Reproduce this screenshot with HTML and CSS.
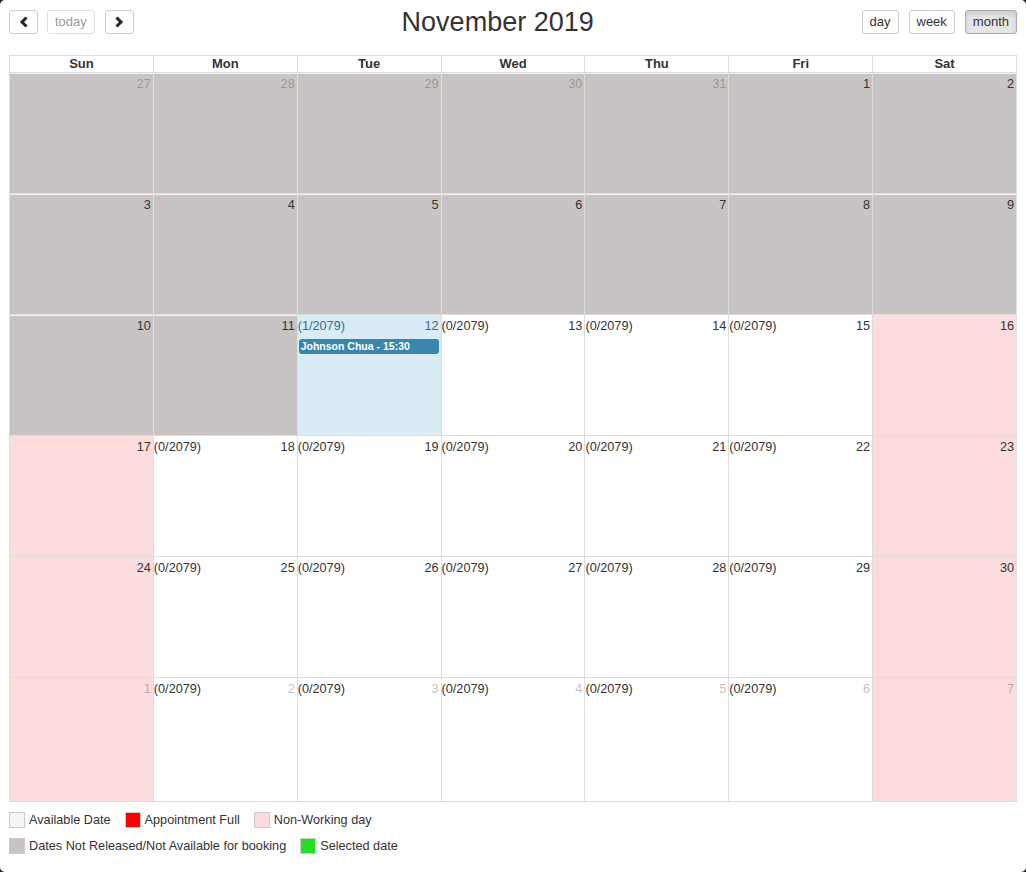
FILE: index.html
```html
<!DOCTYPE html>
<html lang="en">
<head>
<meta charset="UTF-8">
<meta name="viewport" content="width=device-width, initial-scale=1.0">
<title>Appointment Calendar</title>
<link rel="stylesheet" href="styles.css">
</head>
<body>
<div id="panel">
    <div class="toolbar">
        <div class="btn-group">
            <button class="btn icon-btn" title="prev">
                <svg width="10" height="12" viewBox="0 0 10 12"><polyline points="7.5,1.5 3,6 7.5,10.5" fill="none" stroke="#262626" stroke-width="3"/></svg>
            </button>
            <button class="btn" disabled>today</button>
            <button class="btn icon-btn" title="next">
                <svg width="10" height="12" viewBox="0 0 10 12"><polyline points="2.5,1.5 7,6 2.5,10.5" fill="none" stroke="#262626" stroke-width="3"/></svg>
            </button>
        </div>
        <h2>November 2019</h2>
        <div class="btn-group right">
            <button class="btn">day</button>
            <button class="btn">week</button>
            <button class="btn active">month</button>
        </div>
    </div>

    <div class="month">
        <div class="head">Sun</div>
        <div class="head">Mon</div>
        <div class="head">Tue</div>
        <div class="head">Wed</div>
        <div class="head">Thu</div>
        <div class="head">Fri</div>
        <div class="head">Sat</div>

        <!-- week 1 -->
        <div class="day off other"><div class="top"><span></span><span class="num">27</span></div></div>
        <div class="day off other"><div class="top"><span></span><span class="num">28</span></div></div>
        <div class="day off other"><div class="top"><span></span><span class="num">29</span></div></div>
        <div class="day off other"><div class="top"><span></span><span class="num">30</span></div></div>
        <div class="day off other"><div class="top"><span></span><span class="num">31</span></div></div>
        <div class="day off"><div class="top"><span></span><span class="num">1</span></div></div>
        <div class="day off"><div class="top"><span></span><span class="num">2</span></div></div>

        <!-- week 2 -->
        <div class="day off"><div class="top"><span></span><span class="num">3</span></div></div>
        <div class="day off"><div class="top"><span></span><span class="num">4</span></div></div>
        <div class="day off"><div class="top"><span></span><span class="num">5</span></div></div>
        <div class="day off"><div class="top"><span></span><span class="num">6</span></div></div>
        <div class="day off"><div class="top"><span></span><span class="num">7</span></div></div>
        <div class="day off"><div class="top"><span></span><span class="num">8</span></div></div>
        <div class="day off"><div class="top"><span></span><span class="num">9</span></div></div>

        <!-- week 3 -->
        <div class="day off"><div class="top"><span></span><span class="num">10</span></div></div>
        <div class="day off"><div class="top"><span></span><span class="num">11</span></div></div>
        <div class="day today">
            <div class="top"><span class="count">(1/2079)</span><span class="num">12</span></div>
            <div class="event">Johnson Chua - 15:30</div>
        </div>
        <div class="day"><div class="top"><span class="count">(0/2079)</span><span class="num">13</span></div></div>
        <div class="day"><div class="top"><span class="count">(0/2079)</span><span class="num">14</span></div></div>
        <div class="day"><div class="top"><span class="count">(0/2079)</span><span class="num">15</span></div></div>
        <div class="day holiday"><div class="top"><span></span><span class="num">16</span></div></div>

        <!-- week 4 -->
        <div class="day holiday"><div class="top"><span></span><span class="num">17</span></div></div>
        <div class="day"><div class="top"><span class="count">(0/2079)</span><span class="num">18</span></div></div>
        <div class="day"><div class="top"><span class="count">(0/2079)</span><span class="num">19</span></div></div>
        <div class="day"><div class="top"><span class="count">(0/2079)</span><span class="num">20</span></div></div>
        <div class="day"><div class="top"><span class="count">(0/2079)</span><span class="num">21</span></div></div>
        <div class="day"><div class="top"><span class="count">(0/2079)</span><span class="num">22</span></div></div>
        <div class="day holiday"><div class="top"><span></span><span class="num">23</span></div></div>

        <!-- week 5 -->
        <div class="day holiday"><div class="top"><span></span><span class="num">24</span></div></div>
        <div class="day"><div class="top"><span class="count">(0/2079)</span><span class="num">25</span></div></div>
        <div class="day"><div class="top"><span class="count">(0/2079)</span><span class="num">26</span></div></div>
        <div class="day"><div class="top"><span class="count">(0/2079)</span><span class="num">27</span></div></div>
        <div class="day"><div class="top"><span class="count">(0/2079)</span><span class="num">28</span></div></div>
        <div class="day"><div class="top"><span class="count">(0/2079)</span><span class="num">29</span></div></div>
        <div class="day holiday"><div class="top"><span></span><span class="num">30</span></div></div>

        <!-- week 6 -->
        <div class="day last holiday other"><div class="top"><span></span><span class="num">1</span></div></div>
        <div class="day last other"><div class="top"><span class="count">(0/2079)</span><span class="num">2</span></div></div>
        <div class="day last other"><div class="top"><span class="count">(0/2079)</span><span class="num">3</span></div></div>
        <div class="day last other"><div class="top"><span class="count">(0/2079)</span><span class="num">4</span></div></div>
        <div class="day last other"><div class="top"><span class="count">(0/2079)</span><span class="num">5</span></div></div>
        <div class="day last other"><div class="top"><span class="count">(0/2079)</span><span class="num">6</span></div></div>
        <div class="day last holiday other"><div class="top"><span></span><span class="num">7</span></div></div>
    </div>

    <div class="legend">
        <div class="legend-row">
            <span class="swatch available"></span><span>Available Date</span>
            <span class="swatch full"></span><span>Appointment Full</span>
            <span class="swatch nonworking"></span><span>Non-Working day</span>
        </div>
        <div class="legend-row">
            <span class="swatch closed"></span><span>Dates Not Released/Not Available for booking</span>
            <span class="swatch selected"></span><span>Selected date</span>
        </div>
    </div>
</div>
</body>
</html>
```

FILE: styles.css
```css
html {
    background-color: #1e1e24;
}
body {
    margin: 0;
    font-family: "Liberation Sans", Arial, sans-serif;
    font-size: 12.7px;
    color: #333;
}
#panel {
    background-color: #fff;
    border-radius: 5px;
    height: 872px;
    box-sizing: border-box;
    padding: 9px;
}
.toolbar {
    display: flex;
    align-items: center;
    height: 24px;
    margin-top: 1px;
    margin-bottom: 21px;
}
.toolbar h2 {
    flex: 1;
    margin: 0;
    text-align: center;
    font-size: 27px;
    font-weight: normal;
    line-height: 24px;
    color: #333;
}
.btn-group {
    display: flex;
    gap: 9px;
}
.btn-group.right {
    gap: 10px;
}
.btn {
    height: 24px;
    padding: 0 7px;
    border: 1px solid #ccc;
    border-radius: 3px;
    background-color: #fff;
    font-family: inherit;
    font-size: 13px;
    color: #333;
    line-height: 22px;
    display: flex;
    align-items: center;
    justify-content: center;
}
.icon-btn {
    width: 29px;
    padding: 0;
}
.btn-group .icon-btn + .btn {
    margin-right: 1px;
}
.btn:disabled {
    color: #999;
    border-color: #e0e0e0;
}
.btn.active {
    background-color: #e6e6e6;
    border-color: #adadad;
    box-shadow: inset 0 3px 5px rgba(0, 0, 0, 0.125);
}
.month {
    display: grid;
    grid-template-columns: repeat(7, 1fr);
    border-left: 1px solid #ddd;
    border-top: 1px solid #ddd;
}
.head {
    border-right: 1px solid #ddd;
    border-bottom: 1px solid #ddd;
    text-align: center;
    font-weight: bold;
    font-size: 13px;
    line-height: 16px;
    height: 16px;
}
.day {
    border-right: 1px solid #ddd;
    border-bottom: 1px solid #ddd;
    height: 120px;
    background-color: #fff;
}
.day.last {
    height: 123px;
}
.day.off {
    background-color: #c8c4c3;
    box-shadow: inset 0 1px 0 #f2f2f2;
}
.day.holiday {
    background-color: #fddcdd;
}
.day.today {
    background-color: #d9ebf5;
    color: #31708f;
}
.top {
    display: flex;
    justify-content: space-between;
    padding: 3px 2px 0 0;
    line-height: 16px;
}
.other .num {
    opacity: 0.3;
}
.event {
    margin: 5px 2px 0 1px;
    background-color: #3a87ad;
    color: #fff;
    font-weight: bold;
    font-size: 10.5px;
    line-height: 15px;
    height: 15px;
    padding: 0 2px;
    border-radius: 3px;
}
.legend {
    margin-top: 10px;
}
.legend-row {
    display: flex;
    align-items: center;
    height: 16px;
    margin-bottom: 10px;
}
.swatch {
    width: 14px;
    height: 14px;
    border: 1px solid #ccc;
    margin-right: 4px;
    margin-left: 14px;
}
.legend-row .swatch:first-child {
    margin-left: 0;
}
.swatch.available { background-color: #f5f5f5; }
.swatch.full { background-color: #ff0000; }
.swatch.nonworking { background-color: #fddcdd; }
.swatch.closed { background-color: #c8c4c3; }
.swatch.selected { background-color: #22e022; }
```
